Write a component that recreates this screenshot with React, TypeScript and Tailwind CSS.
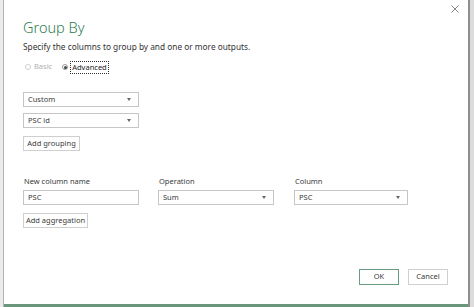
import React from "react";

const font = { fontFamily: '"Noto Sans", "Open Sans", Arial, sans-serif' };

function Select({ value, w }: { value: string; w: string }) {
  return (
    <div className={`${w} h-[15px] border border-[#c6c6c6] bg-white flex items-center justify-between pl-[4px] pr-[7px] text-[7.5px] text-[#3a3a3a] whitespace-nowrap`}>
      <span>{value}</span>
      <svg width="4" height="3" viewBox="0 0 4 3"><path d="M0 0 L4 0 L2 3 Z" fill="#666" /></svg>
    </div>
  );
}

function Button({ label, w }: { label: string; w: string }) {
  return (
    <div className={`${w} h-[15px] border border-[#cfcfcf] bg-white flex items-center justify-center text-[7.5px] text-[#3a3a3a] whitespace-nowrap`}>{label}</div>
  );
}

export default function App() {
  return (
    <div className="w-[474px] h-[307px] flex bg-[#e4e4e4] overflow-hidden" style={font}>
      <div className="w-[4px] h-full bg-[#ebebeb] border-r border-[#b4b4b4]" />
      <div className="flex-1 flex flex-col bg-white border-b-[3px] border-[#6a977c]">
        <div className="flex justify-end pr-[9px] pt-[5px] h-[17px]">
          <svg width="8" height="8" viewBox="0 0 8 8"><path d="M0.5 0.5 L7.5 7.5 M7.5 0.5 L0.5 7.5" stroke="#777" strokeWidth="0.9" /></svg>
        </div>
        <div className="pl-[19px] flex flex-col">
          <div className="text-[14.5px] leading-[20px] font-light text-[#2e7d4f]">Group By</div>
          <div className="text-[8.3px] leading-[14px] text-[#333] mt-[3px]">Specify the columns to group by and one or more outputs.</div>
          <div className="flex items-center mt-[6px] text-[7.5px] h-[14px]">
            <div className="w-[6px] h-[6px] rounded-full border border-[#cfcfcf] ml-[2px]" />
            <span className="ml-[3px] text-[#b0b0b0]">Basic</span>
            <div className="w-[6px] h-[6px] rounded-full border border-[#999] ml-[10px] flex items-center justify-center">
              <div className="w-[3px] h-[3px] rounded-full bg-[#444]" />
            </div>
            <span className="ml-[2px] px-[1px] border border-dotted border-[#333] text-[#222] leading-[11px]">Advanced</span>
          </div>
          <div className="mt-[18px] flex flex-col gap-[6px]">
            <Select value="Custom" w="w-[116px]" />
            <Select value="PSC id" w="w-[116px]" />
          </div>
          <div className="mt-[8px]"><Button label="Add grouping" w="w-[57px]" /></div>
          <div className="mt-[25px] flex">
            <div className="w-[135px] flex flex-col">
              <div className="text-[7.5px] leading-[10px] text-[#3a3a3a] pl-[1px]">New column name</div>
              <div className="mt-[4px] w-[116px] h-[15px] border border-[#c6c6c6] flex items-center pl-[4px] text-[7.5px] text-[#3a3a3a]">PSC</div>
            </div>
            <div className="w-[136px] flex flex-col">
              <div className="text-[7.5px] leading-[10px] text-[#3a3a3a] pl-[1px]">Operation</div>
              <div className="mt-[4px]"><Select value="Sum" w="w-[116px]" /></div>
            </div>
            <div className="flex flex-col">
              <div className="text-[7.5px] leading-[10px] text-[#3a3a3a] pl-[1px]">Column</div>
              <div className="mt-[4px]"><Select value="PSC" w="w-[114px]" /></div>
            </div>
          </div>
          <div className="mt-[8px]"><Button label="Add aggregation" w="w-[65px]" /></div>
        </div>
        <div className="flex-1" />
        <div className="flex justify-end gap-[9px] pr-[20px] mb-[19px]">
          <div className="w-[40px] h-[16px] border border-[#6a9a80] bg-white flex items-center justify-center text-[7.5px] text-[#3a3a3a]">OK</div>
          <div className="w-[40px] h-[16px] border border-[#cfcfcf] bg-white flex items-center justify-center text-[7.5px] text-[#3a3a3a]">Cancel</div>
        </div>
      </div>
      <div className="w-[6px] h-full bg-[#dcdcdc] border-l-2 border-[#8e8e8e]" />
    </div>
  );
}
